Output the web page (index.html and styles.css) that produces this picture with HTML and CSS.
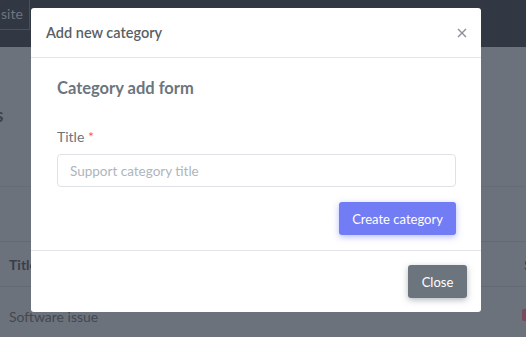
FILE: index.html
```html
<!DOCTYPE html>
<html>
<head>
<meta charset="utf-8">
<link rel="stylesheet" href="styles.css">
</head>
<body>
<div class="page">
  <header class="topbar">
    <div class="site-btn">site</div>
  </header>
  <main class="content">
    <div class="page-title">es</div>
    <div class="card-gap"></div>
    <div class="table">
      <div class="row head"><span class="c1">Title</span><span class="c2">S</span></div>
      <div class="row"><span class="c1 light">Software issue</span><span class="badge"></span></div>
    </div>
  </main>
</div>

<div class="modal">
  <div class="modal-header">
    <h5 class="modal-title">Add new category</h5>
    <span class="close">
      <svg width="10" height="10" viewBox="0 0 10 10"><path d="M1 1L9 9M9 1L1 9" stroke="#8a9096" stroke-width="1.4" fill="none"/></svg>
    </span>
  </div>
  <div class="modal-body">
    <h4 class="form-heading">Category add form</h4>
    <label class="label">Title <span class="req">*</span></label>
    <input class="input" type="text" placeholder="Support category title">
    <div class="actions">
      <button class="btn btn-primary">Create category</button>
    </div>
  </div>
  <div class="modal-footer">
    <button class="btn btn-secondary">Close</button>
  </div>
</div>
</body>
</html>
```

FILE: styles.css
```css
* { box-sizing: border-box; }
html, body { margin: 0; padding: 0; }
body {
  width: 526px;
  height: 337px;
  overflow: hidden;
  background: #6c727c;
  font-family: "Lato", "Noto Sans", sans-serif;
  position: relative;
}
.page { width: 526px; height: 337px; }
.topbar {
  height: 47px;
  background: #313743;
  display: flex;
  align-items: flex-start;
}
.site-btn {
  margin-left: -12px;
  width: 42px;
  height: 30px;
  border: 1px solid #4b515c;
  border-top: none;
  color: #6f7580;
  font-size: 14px;
  line-height: 28px;
  padding-left: 12px;
}
.content { padding-top: 58px; }
.page-title {
  color: #3d424a;
  font-weight: 700;
  font-size: 18px;
  margin-left: -14px;
  line-height: 20px;
}
.card-gap { height: 62px; border-bottom: 1px solid #666c76; }
.table { margin-top: 54px; }
.row {
  height: 45px;
  display: flex;
  align-items: center;
  justify-content: space-between;
  border-top: 1px solid #646a73;
  padding-left: 9px;
  font-size: 14px;
}
.row.head { color: #3a3f47; font-weight: 700; }
.c1.light { color: #43484f; font-weight: 400; padding-top: 14px; }
.c2 { margin-right: -6px; }
.badge {
  width: 10px; height: 12px; margin-right: -6px; margin-top: 12px;
  background: #7a4a5e; border-radius: 2px;
}

.modal {
  position: absolute;
  left: 31px;
  top: 8px;
  width: 450px;
  height: 304px;
  background: #fff;
  border-radius: 3px;
  display: flex;
  flex-direction: column;
}
.modal-header {
  height: 50px;
  border-bottom: 1px solid #e3e6e9;
  display: flex;
  align-items: center;
  justify-content: space-between;
  padding: 0 15px;
}
.modal-title {
  margin: 0;
  font-size: 14.5px;
  font-weight: 600;
  color: #595f66;
}
.close { display: flex; margin-right: -1px; margin-top: 1px; }
.modal-body {
  padding: 20px 25px 15px 26px;
  display: flex;
  flex-direction: column;
  border-bottom: 1px solid #e3e6e9;
}
.form-heading {
  margin: 0;
  font-size: 16.5px;
  line-height: 20px;
  font-weight: 700;
  color: #6c757d;
}
.label {
  margin-top: 29px;
  line-height: 20px;
  font-size: 14px;
  color: #6c757d;
}
.req { color: #fa5c5c; }
.input {
  margin-top: 7px;
  height: 33px;
  border: 1px solid #dee2e6;
  border-radius: 4px;
  padding: 0 12px;
  font-family: inherit;
  font-size: 13.5px;
  color: #6c757d;
  outline: none;
}
.input::placeholder { color: #adb5bd; }
.actions { display: flex; justify-content: flex-end; margin-top: 15px; }
.btn {
  height: 33px;
  border: none;
  border-radius: 3px;
  color: #fff;
  font-family: inherit;
  font-size: 13px;
  white-space: nowrap;
  padding: 0 12px;
}
.btn-primary {
  background: #727cf5;
  box-shadow: 0 2px 6px 0 rgba(114,124,245,0.5);
  min-width: 117px;
}
.btn-secondary {
  background: #6c757d;
  box-shadow: 0 2px 6px 0 rgba(108,117,125,0.5);
  min-width: 59px;
}
.modal-footer {
  flex: 1;
  display: flex;
  justify-content: flex-end;
  align-items: center;
  padding: 0 14px;
}
```
